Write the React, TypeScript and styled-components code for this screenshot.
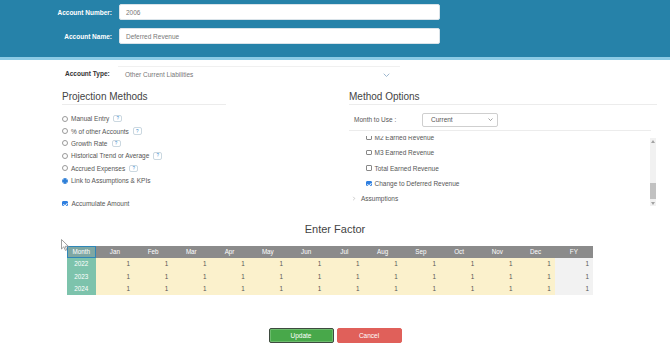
import { useLayoutEffect, useRef } from "react";
import styled, { createGlobalStyle } from "styled-components";

const GlobalStyle = createGlobalStyle`
  html, body {
    margin: 0;
    padding: 0;
    background: #fff;
  }
  body {
    width: 670px;
    height: 351px;
    overflow: hidden;
    font-family: "Liberation Sans", Arial, Helvetica, sans-serif;
    color: #555;
  }
  * {
    box-sizing: border-box;
  }
`;

// data
const methods = [
  { label: "Manual Entry", help: true },
  { label: "% of other Accounts", help: true },
  { label: "Growth Rate", help: true },
  { label: "Historical Trend or Average", help: true },
  { label: "Accrued Expenses", help: true },
  { label: "Link to Assumptions & KPIs", help: false, checked: true },
];

const revenueItems = [
  { label: "Product Revenue" },
  { label: "Deferred Revenue Balance" },
  { label: "M1 Earned Revenue" },
  { label: "M2 Earned Revenue", anchor: true },
  { label: "M3 Earned Revenue" },
  { label: "Total Earned Revenue" },
  { label: "Change to Deferred Revenue", checked: true },
];

const months = ["Jan", "Feb", "Mar", "Apr", "May", "Jun", "Jul", "Aug", "Sep", "Oct", "Nov", "Dec"];
const years = [2022, 2023, 2024];

const Chevron = ({ color = "#8aa9c4", w = 7 }: { color?: string; w?: number }) => (
  <svg width={w} height={w * 0.6} viewBox="0 0 10 6">
    <path d="M1 1l4 4 4-4" fill="none" stroke={color} strokeWidth="1.2" />
  </svg>
);

const CaretIcon = () => (
  <svg width="4" height="5" viewBox="0 0 4 6">
    <path d="M1 1l2 2-2 2" fill="none" stroke="#bbb" strokeWidth="0.9" />
  </svg>
);

const App = () => {
  const listRef = useRef<HTMLDivElement>(null);
  const anchorRef = useRef<HTMLDivElement>(null);

  // scroll position of the options tree
  useLayoutEffect(() => {
    if (listRef.current && anchorRef.current) {
      listRef.current.scrollTop = anchorRef.current.offsetTop + 6;
    }
  }, []);

  return (
    <>
      <GlobalStyle />
      <Page>
        <Header>
          <FieldRow>
            <FieldLabel>Account Number:</FieldLabel>
            <TextInput>2006</TextInput>
          </FieldRow>
          <FieldRow>
            <FieldLabel>Account Name:</FieldLabel>
            <TextInput>Deferred Revenue</TextInput>
          </FieldRow>
        </Header>

        <Main>
          <TypeRow>
            <TypeLabel>Account Type:</TypeLabel>
            <TypeSelect>
              <span>Other Current Liabilities</span>
              <Chevron />
            </TypeSelect>
          </TypeRow>

          <Columns>
            <section>
              <Heading $width={164}>Projection Methods</Heading>
              <MethodList>
                {methods.map((m) => (
                  <OptionRow key={m.label}>
                    <Radio $checked={!!m.checked} />
                    <span>{m.label}</span>
                    {m.help && <Help>?</Help>}
                  </OptionRow>
                ))}
              </MethodList>
              <AccumulateRow>
                <Check $checked />
                <span>Accumulate Amount</span>
              </AccumulateRow>
            </section>

            <section>
              <Heading $width={308}>Method Options</Heading>
              <MonthRow>
                <span>Month to Use :</span>
                <MonthSelect>
                  <span>Current</span>
                  <Chevron color="#666" w={5} />
                </MonthSelect>
              </MonthRow>
              <TreeBox>
                <TreeList ref={listRef}>
                  <TreeGroup>
                    <Caret $open>
                      <CaretIcon />
                    </Caret>
                    <span>Revenue</span>
                  </TreeGroup>
                  {revenueItems.map((item) => (
                    <TreeItem key={item.label} ref={item.anchor ? anchorRef : undefined}>
                      <Check $checked={!!item.checked} />
                      <span>{item.label}</span>
                    </TreeItem>
                  ))}
                  <TreeGroup>
                    <Caret>
                      <CaretIcon />
                    </Caret>
                    <span>Assumptions</span>
                  </TreeGroup>
                  <TreeGroup>
                    <Caret>
                      <CaretIcon />
                    </Caret>
                    <span>KPIs</span>
                  </TreeGroup>
                </TreeList>
                <ScrollTrack>
                  <ScrollArrow>
                    <svg width="4" height="3" viewBox="0 0 4 3">
                      <path d="M0 3L2 0l2 3z" fill="#a3a3a3" />
                    </svg>
                  </ScrollArrow>
                  <ScrollRail>
                    <Thumb $offset={39} />
                  </ScrollRail>
                  <ScrollArrow>
                    <svg width="4" height="3" viewBox="0 0 4 3">
                      <path d="M0 0l2 3 2-3z" fill="#a3a3a3" />
                    </svg>
                  </ScrollArrow>
                </ScrollTrack>
              </TreeBox>
            </section>
          </Columns>
        </Main>

        <FactorTitle>Enter Factor</FactorTitle>
        <FactorGrid>
          <HeadCell $month>Month</HeadCell>
          {months.map((m) => (
            <HeadCell key={m}>{m}</HeadCell>
          ))}
          <HeadCell>FY</HeadCell>
          {years.map((y) => (
            <YearRow key={y}>
              <YearCell>{y}</YearCell>
              {months.map((m) => (
                <ValueCell key={m}>1</ValueCell>
              ))}
              <ValueCell $total>1</ValueCell>
            </YearRow>
          ))}
        </FactorGrid>

        <Actions>
          <Button $kind="update">Update</Button>
          <Button $kind="cancel">Cancel</Button>
        </Actions>

        <Pointer width="8" height="12" viewBox="0 0 8 12">
          <path d="M0.5 0.5v9.5l2.3-2.2 1.6 3.6 1.4-.6-1.6-3.5h3.2z" fill="#fff" stroke="#888" strokeWidth="0.8" />
        </Pointer>
      </Page>
    </>
  );
};

const Page = styled.div`
  position: relative;
  width: 670px;
  height: 351px;
`;

const Header = styled.header`
  height: 60px;
  padding-top: 4px;
  background: #2682a9;
  border-bottom: 3px solid #8ccbe5;
  display: flex;
  flex-direction: column;
  gap: 8px;
`;
const FieldRow = styled.div`
  display: grid;
  grid-template-columns: 112px 321px;
  column-gap: 7px;
  align-items: center;
`;
const FieldLabel = styled.label`
  text-align: right;
  color: #fff;
  font-size: 6.5px;
  font-weight: bold;
`;
const TextInput = styled.div`
  height: 16px;
  display: flex;
  align-items: center;
  padding-left: 6px;
  background: #fff;
  border: 1px solid #d9e3e9;
  border-radius: 2px;
  font-size: 6.5px;
  color: #777;
`;

const Main = styled.main`
  padding-left: 62px;
`;
const TypeRow = styled.div`
  margin-top: 6px;
  display: grid;
  grid-template-columns: 56px 282px;
  align-items: center;
  line-height: 1.3;
`;
const TypeLabel = styled.span`
  padding-left: 3px;
  font-size: 6.5px;
  font-weight: bold;
  color: #333;
`;
const TypeSelect = styled.div`
  height: 17px;
  display: flex;
  align-items: center;
  justify-content: space-between;
  padding: 0 10px 0 7px;
  border-top: 1px solid #f0f0f0;
  font-size: 6.5px;
  color: #777;
`;

const Columns = styled.div`
  display: grid;
  grid-template-columns: 287px 309px;
`;
const Heading = styled.h2<{ $width: number }>`
  width: ${(p) => p.$width}px;
  margin: 8px 0 0;
  padding-bottom: 1px;
  border-bottom: 1px solid #ececec;
  font-size: 10px;
  line-height: 12px;
  font-weight: normal;
  color: #444;
`;
const MethodList = styled.div`
  margin-top: 7.5px;
`;
const OptionRow = styled.div`
  height: 12.4px;
  display: flex;
  align-items: center;
  gap: 3px;
  font-size: 6.5px;
  color: #555;
`;
const AccumulateRow = styled(OptionRow)`
  margin-top: 10.5px;
  gap: 4px;
`;
const Radio = styled.span<{ $checked: boolean }>`
  width: 6px;
  height: 6px;
  border-radius: 50%;
  border: 0.8px solid ${(p) => (p.$checked ? "#2f80d8" : "#9a9a9a")};
  background: ${(p) => (p.$checked ? "radial-gradient(circle, #2f80d8 0 1.6px, #fff 1.9px)" : "#fff")};
  flex-shrink: 0;
`;
const Help = styled.span`
  margin-left: 1px;
  width: 9px;
  height: 7.5px;
  display: flex;
  align-items: center;
  justify-content: center;
  border: 0.8px solid #cbd8e0;
  border-radius: 2px;
  font-size: 4.5px;
  color: #3b8fd0;
`;
const Check = styled.span<{ $checked: boolean }>`
  width: 5.5px;
  height: 5.5px;
  flex-shrink: 0;
  border-radius: 1px;
  border: 0.8px solid ${(p) => (p.$checked ? "#2f7fe0" : "#888")};
  background: ${(p) => (p.$checked ? "#2f7fe0" : "#fff")};
  position: relative;
  &::after {
    content: "";
    display: ${(p) => (p.$checked ? "block" : "none")};
    position: absolute;
    left: 1.3px;
    top: 0.2px;
    width: 1.6px;
    height: 2.8px;
    border: solid #fff;
    border-width: 0 0.9px 0.9px 0;
    transform: rotate(40deg);
  }
`;

const MonthRow = styled.div`
  margin-top: 7.5px;
  width: 302px;
  padding: 0 0 3.5px 5px;
  border-bottom: 1px solid #ececec;
  display: grid;
  grid-template-columns: 68px 76px;
  align-items: center;
  font-size: 6.5px;
  color: #555;
`;
const MonthSelect = styled.div`
  height: 14px;
  display: flex;
  align-items: center;
  justify-content: space-between;
  padding: 0 4px 0 8px;
  border: 1px solid #cfcfcf;
  border-radius: 2px;
  font-size: 6.5px;
  color: #555;
`;

const TreeBox = styled.div`
  margin-top: 5px;
  width: 308px;
  height: 70px;
  display: flex;
`;
const TreeList = styled.div`
  position: relative;
  flex: 1;
  overflow: hidden;
`;
const TreeGroup = styled.div`
  height: 15.4px;
  display: flex;
  align-items: center;
  gap: 5px;
  padding-left: 3px;
  font-size: 6.5px;
  color: #555;
`;
const Caret = styled.span<{ $open?: boolean }>`
  display: flex;
  transform: rotate(${(p) => (p.$open ? 90 : 0)}deg);
`;
const TreeItem = styled.div`
  height: 15.4px;
  display: flex;
  align-items: center;
  gap: 3px;
  padding-left: 17px;
  font-size: 6.5px;
  color: #555;
`;
const ScrollTrack = styled.div`
  width: 6px;
  margin: 2px 1px 0 0;
  background: #f1f1f1;
  display: flex;
  flex-direction: column;
`;
const ScrollArrow = styled.div`
  height: 6px;
  display: flex;
  align-items: center;
  justify-content: center;
`;
const ScrollRail = styled.div`
  flex: 1;
`;
const Thumb = styled.div<{ $offset: number }>`
  margin-top: ${(p) => p.$offset}px;
  height: 16px;
  background: #c1c1c1;
`;

const FactorTitle = styled.h3`
  margin: 13px 0 0;
  text-align: center;
  font-size: 11px;
  line-height: 13px;
  font-weight: normal;
  color: #444;
`;
const FactorGrid = styled.div`
  margin: 10px 0 0 67px;
  width: 526px;
  display: grid;
  grid-template-columns: 28.7px repeat(13, 1fr);
  grid-auto-rows: 12.4px;
  grid-template-rows: 12px;
  font-size: 6.3px;
`;
const HeadCell = styled.div<{ $month?: boolean }>`
  display: flex;
  align-items: center;
  justify-content: center;
  background: ${(p) => (p.$month ? "#7ea7a3" : "#8b8b8b")};
  border: ${(p) => (p.$month ? "1px solid #2f86b8" : "none")};
  color: #fff;
`;
const YearRow = styled.div`
  display: contents;
`;
const YearCell = styled.div`
  display: flex;
  align-items: center;
  justify-content: center;
  background: #7dc3ac;
  color: #fff;
`;
const ValueCell = styled.div<{ $total?: boolean }>`
  display: flex;
  align-items: center;
  justify-content: flex-end;
  padding-right: 4px;
  background: ${(p) => (p.$total ? "#f2f2f2" : "#fbf1cc")};
  color: #555;
`;

const Actions = styled.div`
  margin-top: 33px;
  display: flex;
  justify-content: center;
  gap: 3px;
`;
const Button = styled.button<{ $kind: "update" | "cancel" }>`
  width: 65px;
  height: 15px;
  padding: 0;
  border-radius: 2px;
  border: 1px solid ${(p) => (p.$kind === "update" ? "#3e4a3f" : "#e0605a")};
  background: ${(p) => (p.$kind === "update" ? "#48a84a" : "#e0605a")};
  box-shadow: ${(p) => (p.$kind === "update" ? "inset 0 0 0 0.5px #8fd08f" : "none")};
  color: #fff;
  font-family: inherit;
  font-size: 6.5px;
`;

const Pointer = styled.svg`
  position: absolute;
  left: 61px;
  top: 239px;
`;

export default App;
